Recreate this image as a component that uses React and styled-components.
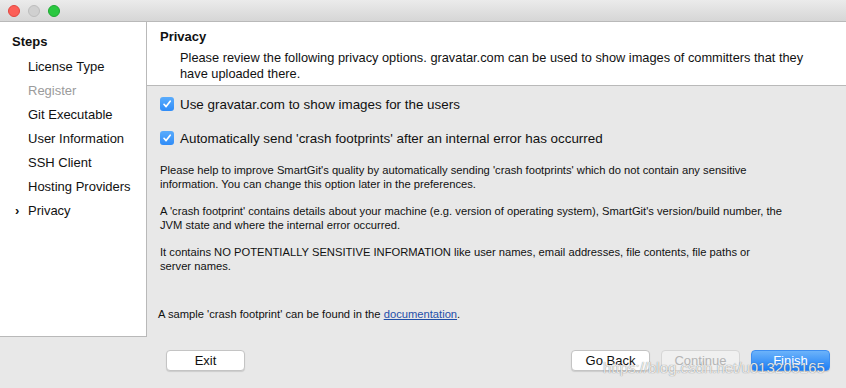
import React from 'react'
import styled, { createGlobalStyle } from 'styled-components'

const GlobalStyle = createGlobalStyle`
  html, body {
    margin: 0;
    padding: 0;
    background: #e8e8e8;
  }
  body {
    font-family: "Liberation Sans", Arial, sans-serif;
    color: #111;
  }
`

const Window = styled.div`
  position: relative;
  width: 846px;
  height: 388px;
  display: flex;
  flex-direction: column;
  background: #e8e8e8;
  overflow: hidden;
`

const TitleBar = styled.div`
  height: 21px;
  display: flex;
  align-items: center;
  gap: 8px;
  padding-left: 8px;
  background: linear-gradient(#ebebeb, #d6d6d6);
  border-bottom: 1px solid #b9b9b9;
`

const Light = styled.span`
  width: 12px;
  height: 12px;
  border-radius: 50%;
  background: ${p => p.color};
  box-sizing: border-box;
  border: 1px solid ${p => p.edge};
`

const Body = styled.div`
  display: flex;
  height: 315px;
`

const Sidebar = styled.div`
  width: 147px;
  flex-shrink: 0;
  background: #fff;
  border-right: 1px solid #b9b9b9;
  border-bottom: 1px solid #b9b9b9;
  box-sizing: border-box;
  padding-top: 7px;
`

const StepsTitle = styled.div`
  font-weight: bold;
  font-size: 13px;
  line-height: 26px;
  padding-left: 12px;
`

const StepItem = styled.div`
  position: relative;
  font-size: 13px;
  line-height: 24px;
  padding-left: 28px;
  color: ${p => (p.disabled ? '#9b9b9b' : '#111')};
`

const Chevron = styled.span`
  position: absolute;
  left: 15px;
  top: 0;
  font-weight: bold;
  font-size: 13px;
`

const Main = styled.div`
  flex: 1;
  display: flex;
  flex-direction: column;
`

const Header = styled.div`
  background: #fff;
  border-bottom: 1px solid #b9b9b9;
  height: 64px;
  box-sizing: border-box;
  padding: 7px 13px 0 13px;
`

const HeaderTitle = styled.div`
  font-weight: bold;
  font-size: 13px;
  line-height: 16px;
`

const HeaderText = styled.div`
  font-size: 12.8px;
  line-height: 16px;
  padding-left: 20px;
  margin-top: 5px;
  white-space: nowrap;
`

const Content = styled.div`
  flex: 1;
  padding: 1px 13px 0 13px;
  display: flex;
  flex-direction: column;
`

const CheckRow = styled.label`
  display: flex;
  align-items: center;
  gap: 6px;
  font-size: 13.4px;
  height: 34px;
`

const Box = styled.span`
  width: 14px;
  height: 14px;
  border-radius: 3px;
  background: linear-gradient(#5aacfc, #2f8cf8);
  display: flex;
  align-items: center;
  justify-content: center;
  flex-shrink: 0;
`

const Para = styled.p`
  margin: 0 0 14px 0;
  font-size: 11.2px;
  line-height: 13.5px;
  white-space: nowrap;
`

const Notes = styled.div`
  margin-top: 9px;
`

const Sample = styled.p`
  margin: 20px 0 0 -2px;
  font-size: 11.2px;
  line-height: 14px;
`

const Link = styled.a`
  color: #1f4fa8;
  text-decoration: underline;
`

const Footer = styled.div`
  flex: 1;
  display: flex;
  align-items: center;
  padding: 0 16px 4px 166px;
`

const Spacer = styled.div`
  flex: 1;
`

const Button = styled.button`
  width: 79px;
  height: 21px;
  margin-left: ${p => p.gap || 0}px;
  font-family: "Liberation Sans", Arial, sans-serif;
  font-size: 13px;
  border-radius: 4px;
  border: 1px solid ${p => (p.primary ? '#3d8ef0' : '#c4c4c4')};
  background: ${p => (p.primary ? 'linear-gradient(#6cb3fa, #1c7ef5)' : '#fff')};
  color: ${p => (p.primary ? '#fff' : p.disabled ? '#b4b4b4' : '#111')};
  box-shadow: 0 1px 1px rgba(0, 0, 0, 0.12);
  padding: 0;
  ${p => p.disabled && 'background: #f0f0f0; border-color: #d6d6d6; box-shadow: none;'}
`

const Watermark = styled.div`
  position: absolute;
  left: 603px;
  top: 359px;
  font-family: "Liberation Sans", Arial, sans-serif;
  font-size: 15px;
  color: rgba(255, 255, 255, 0.85);
  text-shadow: 0 0 1px rgba(70, 70, 70, 0.8);
  pointer-events: none;
`

function Check() {
  return (
    <svg width="10" height="10" viewBox="0 0 10 10">
      <path d="M2 5.3 L4.1 7.6 L8.2 2.2" fill="none" stroke="#fff" strokeWidth="1.7" strokeLinecap="round" strokeLinejoin="round" />
    </svg>
  )
}

const steps = [
  { label: 'License Type' },
  { label: 'Register', disabled: true },
  { label: 'Git Executable' },
  { label: 'User Information' },
  { label: 'SSH Client' },
  { label: 'Hosting Providers' },
  { label: 'Privacy', current: true },
]

export default function App() {
  return (
    <Window>
      <GlobalStyle />
      <TitleBar>
        <Light color="#fc5f57" edge="#e2463f" />
        <Light color="#d0d0d0" edge="#bdbdbd" />
        <Light color="#2ac840" edge="#1ea832" />
      </TitleBar>
      <Body>
        <Sidebar>
          <StepsTitle>Steps</StepsTitle>
          {steps.map(s => (
            <StepItem key={s.label} disabled={s.disabled}>
              {s.current && <Chevron>›</Chevron>}
              {s.label}
            </StepItem>
          ))}
        </Sidebar>
        <Main>
          <Header>
            <HeaderTitle>Privacy</HeaderTitle>
            <HeaderText>
              Please review the following privacy options. gravatar.com can be used to show images of committers that they
              <br />
              have uploaded there.
            </HeaderText>
          </Header>
          <Content>
            <CheckRow>
              <Box><Check /></Box>
              Use gravatar.com to show images for the users
            </CheckRow>
            <CheckRow>
              <Box><Check /></Box>
              Automatically send 'crash footprints' after an internal error has occurred
            </CheckRow>
            <Notes>
              <Para>
                Please help to improve SmartGit's quality by automatically sending 'crash footprints' which do not contain any sensitive
                <br />
                information. You can change this option later in the preferences.
              </Para>
              <Para>
                A 'crash footprint' contains details about your machine (e.g. version of operating system), SmartGit's version/build number, the
                <br />
                JVM state and where the internal error occurred.
              </Para>
              <Para>
                It contains NO POTENTIALLY SENSITIVE INFORMATION like user names, email addresses, file contents, file paths or
                <br />
                server names.
              </Para>
            </Notes>
            <Sample>
              A sample 'crash footprint' can be found in the <Link>documentation</Link>.
            </Sample>
          </Content>
        </Main>
      </Body>
      <Footer>
        <Button>Exit</Button>
        <Spacer />
        <Button>Go Back</Button>
        <Button gap={11} disabled>Continue</Button>
        <Button gap={11} primary>Finish</Button>
      </Footer>
      <Watermark>https://blog.csdn.net/u013205165</Watermark>
    </Window>
  )
}
